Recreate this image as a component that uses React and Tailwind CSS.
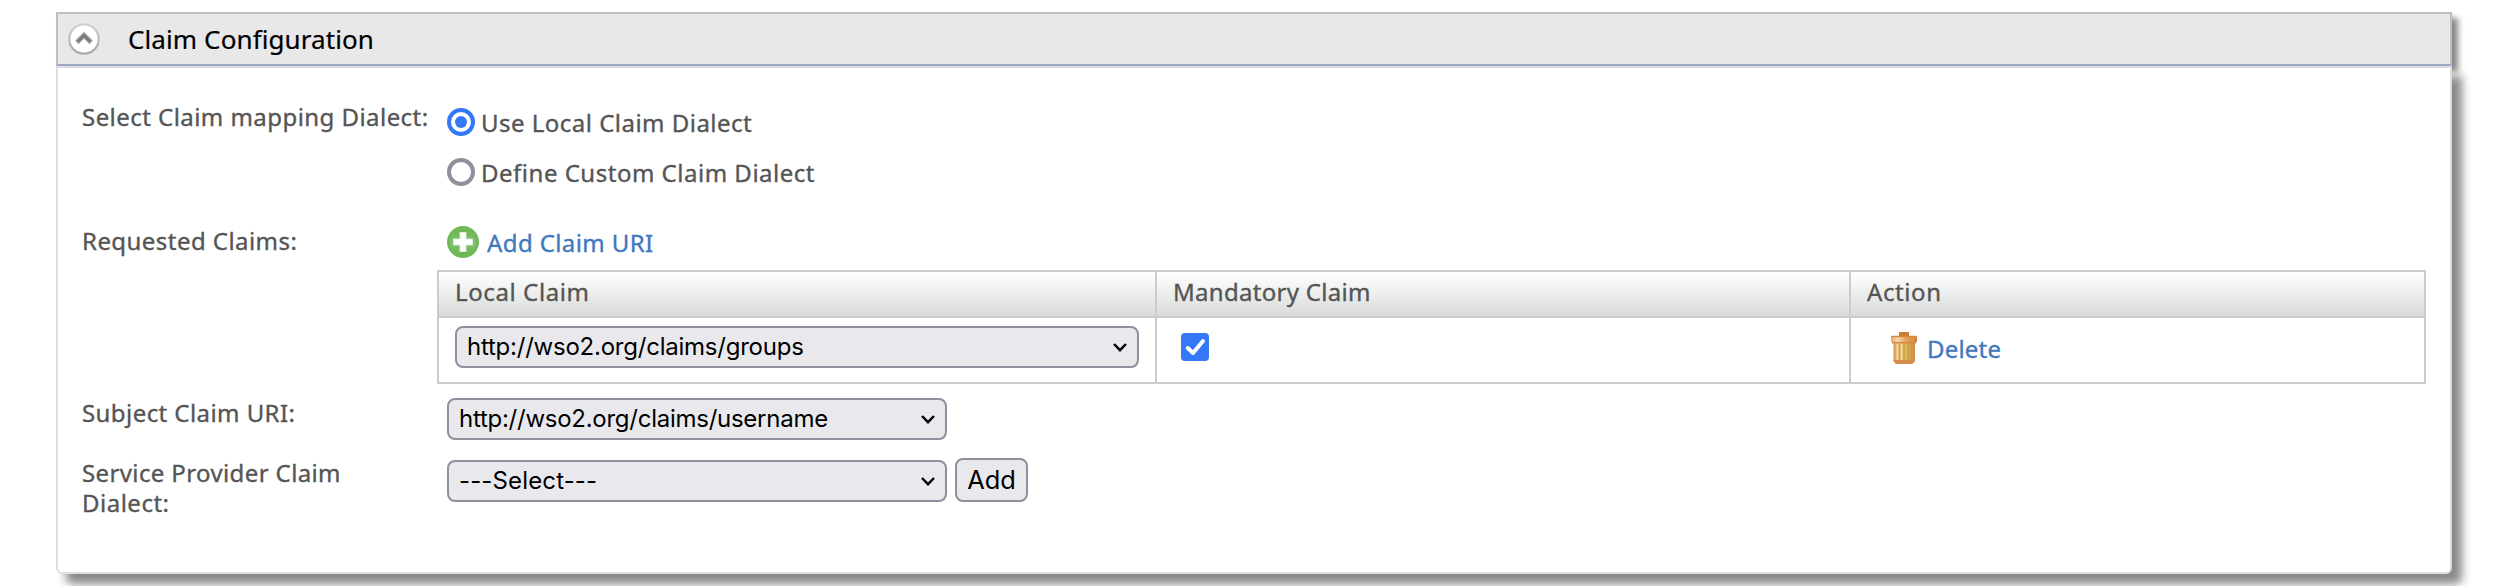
function Chevron({ className }) {
  return (
    <svg className={className} width="14" height="9" viewBox="0 0 14 9" fill="none">
      <path d="M1 1 L7 7.2 L13 1" stroke="#000" strokeWidth="2.4" />
    </svg>
  );
}

function SelectBox({ className, textClass, children }) {
  return (
    <div
      className={`flex h-[42px] items-center justify-between rounded-lg border-2 border-[#8f8f9d] bg-[#e9e9ed] pr-2.5 pl-2.5 font-['Inter',sans-serif] text-2xl text-black [-webkit-text-stroke:0px] ${className}`}
    >
      <span className={`whitespace-nowrap leading-[38px] ${textClass}`}>{children}</span>
      <Chevron />
    </div>
  );
}

function Radio({ checked }) {
  return (
    <svg width="28" height="28" viewBox="0 0 28 28" className="shrink-0">
      <circle cx="14" cy="14" r="12" fill="#fff" stroke={checked ? "#3478f6" : "#8f8f9d"} strokeWidth="4" />
      {checked && <circle cx="14" cy="14" r="6" fill="#3478f6" />}
    </svg>
  );
}

function CollapseIcon() {
  return (
    <svg width="32" height="32" viewBox="0 0 32 32" className="shrink-0">
      <defs>
        <linearGradient id="ring" x1="0" y1="0" x2="0" y2="1">
          <stop offset="0" stopColor="#d2d2d2" />
          <stop offset="1" stopColor="#a8a8a8" />
        </linearGradient>
      </defs>
      <circle cx="16" cy="16" r="14.7" fill="#fff" stroke="url(#ring)" strokeWidth="2.2" />
      <path d="M8.8 19.4 L16 12.2 L23.2 19.4" fill="none" stroke="#bdbdbd" strokeWidth="5.2" />
      <path d="M9.4 19 L16 12.4 L22.6 19" fill="none" stroke="#7c7c7c" strokeWidth="3.4" />
    </svg>
  );
}

function AddIcon() {
  return (
    <svg width="32" height="32" viewBox="0 0 32 32" className="shrink-0">
      <defs>
        <linearGradient id="green" x1="0" y1="0" x2="0" y2="1">
          <stop offset="0" stopColor="#6ab651" />
          <stop offset="0.55" stopColor="#84bf70" />
          <stop offset="1" stopColor="#68b550" />
        </linearGradient>
      </defs>
      <circle cx="16" cy="16" r="16" fill="#6fb957" />
      <circle cx="16" cy="16" r="13" fill="url(#green)" />
      <path d="M16 6 V26 M6 16 H26" stroke="#b9dcad" strokeWidth="7.6" />
      <path d="M16 6.5 V25.5 M6.5 16 H25.5" stroke="#fff" strokeWidth="5.4" />
    </svg>
  );
}

function TrashIcon() {
  return (
    <svg width="26" height="32" viewBox="0 0 26 32" className="shrink-0">
      <defs>
        <linearGradient id="lid" x1="0" y1="0" x2="1" y2="0">
          <stop offset="0" stopColor="#e0a564" />
          <stop offset="0.25" stopColor="#f5d9b4" />
          <stop offset="0.6" stopColor="#e3a25a" />
          <stop offset="1" stopColor="#cf843a" />
        </linearGradient>
        <linearGradient id="can" x1="0" y1="0" x2="1" y2="0">
          <stop offset="0" stopColor="#d58f45" />
          <stop offset="0.2" stopColor="#efcb86" />
          <stop offset="0.6" stopColor="#dfb75f" />
          <stop offset="1" stopColor="#d08a43" />
        </linearGradient>
      </defs>
      <path d="M8 0 H18 V5 H8 Z" fill="#cb7c2f" />
      <path d="M2.5 10 H24 V29 L21 32 H5 L2.5 29 Z" fill="url(#can)" />
      <path d="M6.5 12 V28 M10.5 12 V28" stroke="#f4dca0" strokeWidth="1.6" />
      <path d="M8.5 12 V28 M13 12 V28 M17 12 V28 M20.5 12 V28" stroke="#c99a45" strokeWidth="1.3" />
      <path d="M2.5 28 H24 V29 L21 32 H5 L2.5 29 Z" fill="#d48b4a" />
      <path d="M0 4 H26 V10 H24.5 V11.5 H2 V10 H0 Z" fill="url(#lid)" />
      <path d="M0 4.5 H26 M1 10.7 H25" stroke="#d58a3f" strokeWidth="1.4" />
    </svg>
  );
}

const heads = "h-[46px] border-2 border-[#cccccc] bg-linear-to-b from-white via-[#eceeed] to-[#d8d9db] p-0 pl-4 text-left align-top font-normal leading-[30px]";
const cells = "h-[66px] border-2 border-[#cccccc] p-0 align-top";

export default function App() {
  return (
    <div className="h-[586px] w-[2506px] overflow-hidden bg-white pt-3 pl-14 font-['Noto_Sans','Open_Sans',sans-serif] text-2xl leading-[30px] text-[#555555] [-webkit-text-stroke:0.35px]">
      <h2 className="flex h-[54px] w-[2396px] items-start border-2 border-[#c0c0c0] border-b-[#9ba8c8] bg-[#e8e8e8] pt-[9px] pl-2.5 text-black shadow-[6px_6px_6px_#888888]">
        <CollapseIcon />
        <span className="ml-7 text-[26px] leading-8 tracking-[0.1px] whitespace-nowrap [-webkit-text-stroke:0.2px]">Claim Configuration</span>
      </h2>
      <div className="h-[508px] w-[2396px] rounded-b-md border-2 border-[#dedede] bg-white pl-6 shadow-[10px_10px_10px_#888888]">
        <div className="flex h-[150px]">
          <div className="w-[355px] pt-[34px] tracking-[0.45px] whitespace-nowrap">Select Claim mapping Dialect:</div>
          <div className="flex flex-col gap-5 pt-10 pl-2.5">
            <label className="flex h-[30px] items-start gap-1.5 tracking-[0.48px]">
              <Radio checked />
              <span>Use Local Claim Dialect</span>
            </label>
            <label className="flex h-[30px] items-start gap-1.5 tracking-[0.51px]">
              <Radio />
              <span>Define Custom Claim Dialect</span>
            </label>
          </div>
        </div>
        <div className="flex h-[180px]">
          <div className="w-[355px] pt-2 tracking-[0.45px]">Requested Claims:</div>
          <div className="pt-2">
            <a className="flex h-11 items-start gap-2 pl-2.5 text-[#4078bd]">
              <AddIcon />
              <span className="pt-0.5 tracking-[0.4px]">Add Claim URI</span>
            </a>
            <table className="w-[1989px] table-fixed border-collapse">
              <colgroup>
                <col className="w-[718px]" />
                <col className="w-[694px]" />
                <col />
              </colgroup>
              <thead>
                <tr>
                  <th className={heads}><div className="pt-[5px] tracking-[0.6px]">Local Claim</div></th>
                  <th className={heads}><div className="pt-[5px] tracking-[0.3px]">Mandatory Claim</div></th>
                  <th className={heads}><div className="pt-[5px] tracking-[0.6px]">Action</div></th>
                </tr>
              </thead>
              <tbody>
                <tr>
                  <td className={cells}>
                    <div className="pt-2 pl-4">
                      <SelectBox className="w-[684px]" textClass="tracking-[-0.23px]">http://wso2.org/claims/groups</SelectBox>
                    </div>
                  </td>
                  <td className={cells}>
                    <div className="pt-[15px] pl-6">
                      <svg width="28" height="28" viewBox="0 0 28 28">
                        <rect width="28" height="28" rx="4" fill="#3478f6" />
                        <path d="M6.8 15 L12 20 L22 8" fill="none" stroke="#fff" strokeWidth="4" strokeLinecap="round" strokeLinejoin="round" />
                      </svg>
                    </div>
                  </td>
                  <td className={cells}>
                    <a className="flex items-start gap-2.5 pt-3.5 pl-10 text-[#4078bd]">
                      <TrashIcon />
                      <span className="pt-0.5 tracking-[0.2px]">Delete</span>
                    </a>
                  </td>
                </tr>
              </tbody>
            </table>
          </div>
        </div>
        <div className="flex h-[60px]">
          <div className="w-[365px] tracking-[0.43px]">Subject Claim URI:</div>
          <SelectBox className="w-[500px]" textClass="tracking-[-0.26px]">http://wso2.org/claims/username</SelectBox>
        </div>
        <div className="flex">
          <div className="w-[365px]">
            <div className="tracking-[0.38px]">Service Provider Claim</div>
            <div className="tracking-[0.5px]">Dialect:</div>
          </div>
          <SelectBox className="mt-0.5 w-[500px]" textClass="tracking-[0.14px]">---Select---</SelectBox>
          <button className="ml-2 h-11 w-[73px] rounded-lg border-2 border-[#8f8f9d] bg-[#e9e9ed] font-['Inter',sans-serif] text-[25.4px] leading-10 text-black [-webkit-text-stroke:0px]">
            Add
          </button>
        </div>
      </div>
    </div>
  );
}
